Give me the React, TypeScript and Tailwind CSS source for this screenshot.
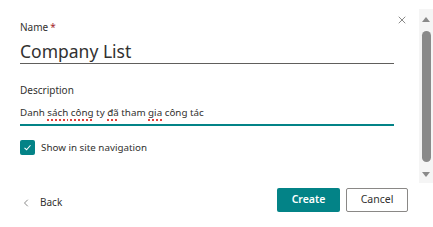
import { ChevronLeft, X } from "lucide-react";

const font = { fontFamily: '"Noto Sans", "Open Sans", sans-serif' };

const Misspelled = ({ children }: { children: string }) => (
  <span className="underline decoration-dotted decoration-[#e0403a] decoration-[1.5px] underline-offset-[3px]">
    {children}
  </span>
);

const Scrollbar = () => (
  <div className="mt-[9px] flex h-[174px] w-[14px] flex-col items-center bg-[#f5f5f5]">
    <div className="mt-[8px] h-0 w-0 border-x-[4.5px] border-b-[5px] border-x-transparent border-b-[#8a8a8a]" />
    <div className="mt-[9px] h-[131px] w-[9px] rounded-full bg-[#8a8a8a]" />
    <div className="mt-[10px] h-0 w-0 border-x-[4.5px] border-t-[5px] border-x-transparent border-t-[#8a8a8a]" />
  </div>
);

export default function App() {
  return (
    <div className="relative flex h-[227px] w-[433px] flex-col bg-white text-[#323130]" style={font}>
      <div className="flex h-[183px]">
        <div className="flex flex-1 flex-col pl-[20px] pr-[25px]">
          <div className="mt-[20px] flex h-[14px] items-center text-[10px] leading-[14px]">
            Name <span className="ml-[2px] text-[#a4262c]">*</span>
          </div>
          <div className="mt-[5px] h-[25px] border-b border-[#605e5c] text-[17.5px] leading-[24px]">
            Company List
          </div>
          <div className="mt-[19px] h-[14px] text-[10px] leading-[14px]">Description</div>
          <div className="mt-[9px] h-[20px] border-b-2 border-[#038387] text-[9.8px] leading-[14px]">
            Danh <Misspelled>sách</Misspelled> <Misspelled>công</Misspelled> ty{" "}
            <Misspelled>đã</Misspelled> tham <Misspelled>gia</Misspelled> công tác
          </div>
          <label className="mt-[14px] flex items-center gap-[6px] text-[9.8px]">
            <span className="flex h-[15px] w-[15px] items-center justify-center rounded-[2px] bg-[#038387]">
              <svg width="9" height="9" viewBox="0 0 12 12" fill="none">
                <path d="M2 6.5 L4.8 9 L10 3" stroke="white" strokeWidth="1.4" />
              </svg>
            </span>
            <span className="mt-[1px]">Show in site navigation</span>
          </label>
        </div>
        <Scrollbar />
      </div>

      <button type="button" className="absolute left-[396px] top-[14px] text-[#3b3a39]">
        <X size={12} strokeWidth={1.2} />
      </button>

      <div className="flex items-start pl-[20px] pr-[25px] pt-[5px]">
        <button type="button" className="mt-[7px] flex items-center gap-[8px] text-[10px]">
          <ChevronLeft size={12} strokeWidth={1.2} className="text-[#3b3a39]" />
          Back
        </button>
        <div className="ml-auto flex gap-[6px]">
          <button
            type="button"
            className="h-[24px] w-[63px] rounded-[2px] bg-[#038387] text-[10.5px] font-semibold text-white"
          >
            Create
          </button>
          <button
            type="button"
            className="h-[24px] w-[62px] rounded-[2px] border border-[#8a8886] bg-white text-[10.5px]"
          >
            Cancel
          </button>
        </div>
      </div>
    </div>
  );
}
